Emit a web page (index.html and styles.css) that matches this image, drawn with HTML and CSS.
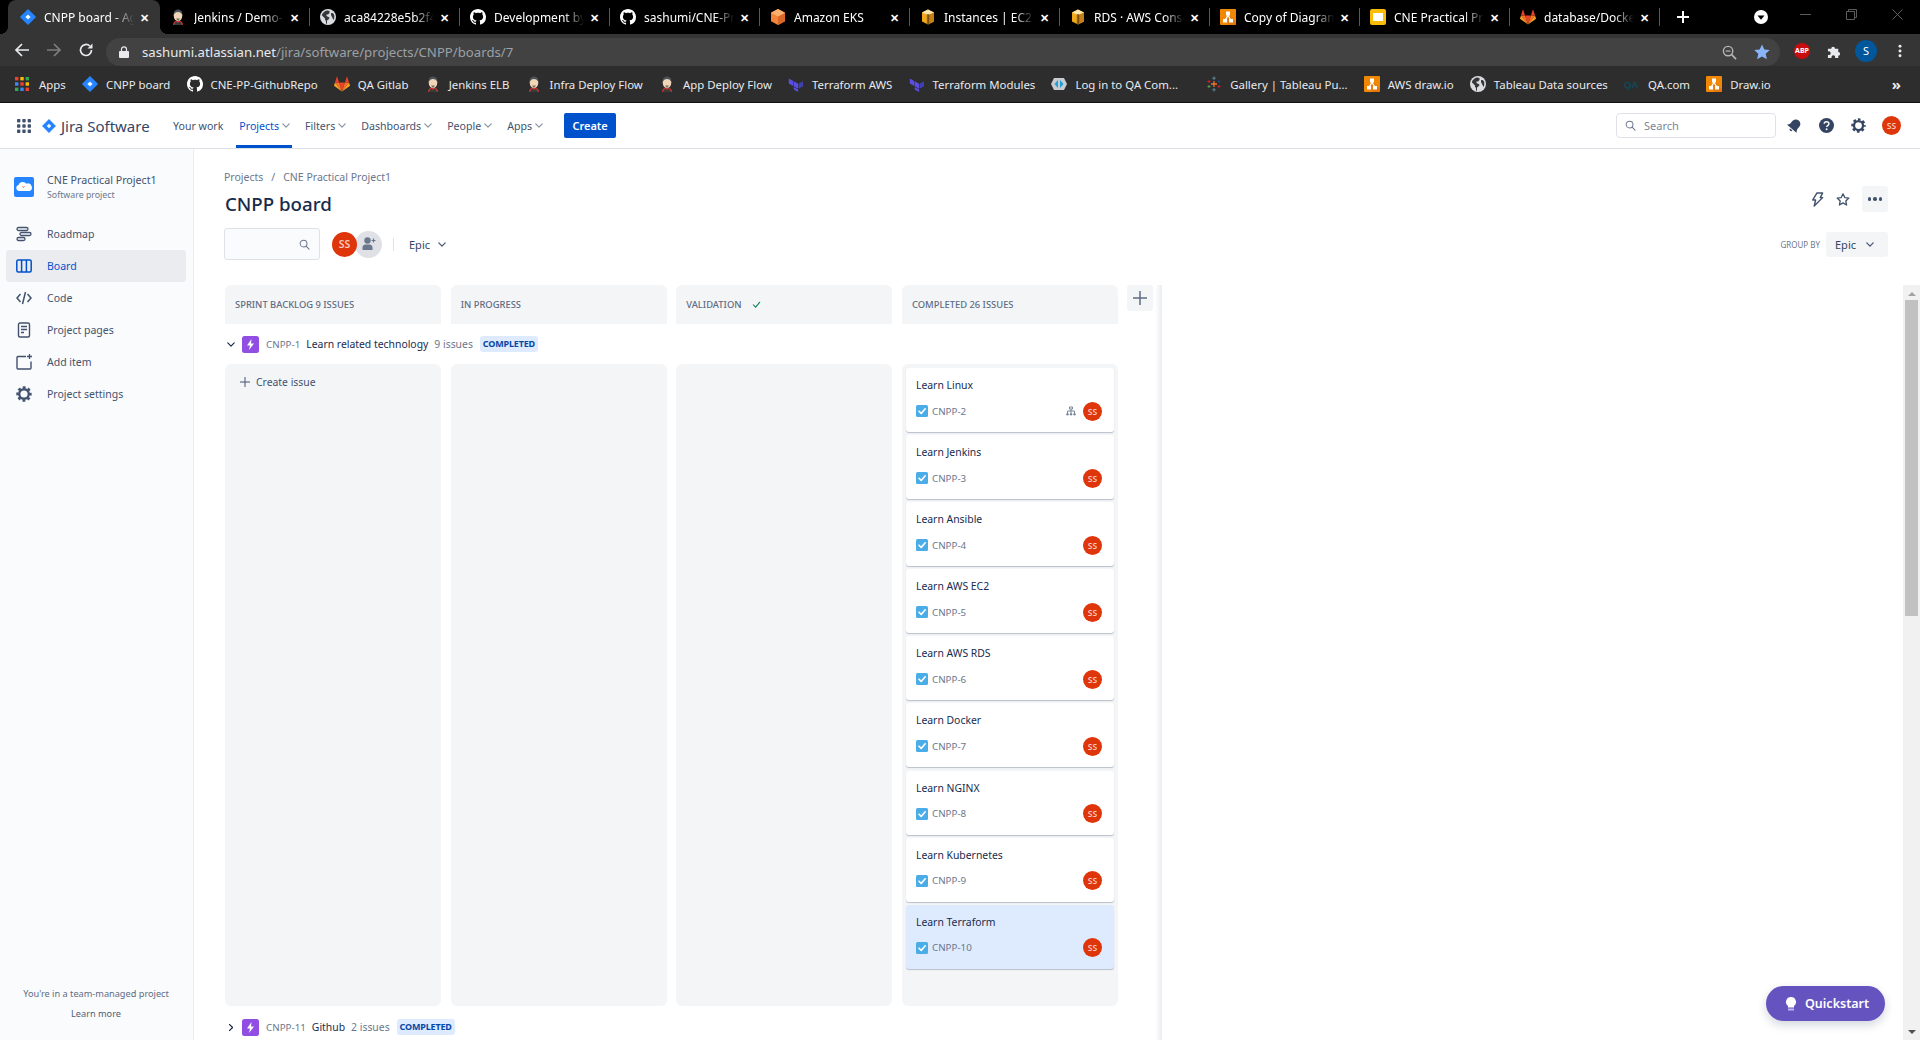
FILE: index.html
```html
<!DOCTYPE html>
<html lang="en">
<head>
<meta charset="utf-8">
<title>CNPP board</title>
<link rel="stylesheet" href="styles.css">
</head>
<body>
<svg class="defs" width="0" height="0" aria-hidden="true">
  <symbol id="i-jira" viewBox="0 0 16 16"><path fill="#2684ff" d="M8 0l7.6 7.6a.6.6 0 0 1 0 .8L8 16 .4 8.4a.6.6 0 0 1 0-.8z"/><path fill="#fff" d="M8 5.4L10.6 8 8 10.6 5.4 8z" opacity=".95"/></symbol>
  <symbol id="i-jenkins" viewBox="0 0 16 16"><path fill="#d33833" d="M3 16c0-3 2-4.500 5-4.500s5 1.500 5 4.500z"/><path fill="#3a3a3a" d="M4 16c.5-2 1.500-3 2.500-3.500L8 14l1.500-1.500c1 .5 2 1.500 2.500 3.500z"/><ellipse cx="8" cy="6.500" rx="4.300" ry="5.500" fill="#f0d6b7"/><path fill="#49525c" d="M3.700 6C3.500 2 6 .5 8 .5s4.500 1.500 4.300 5.500c-1-2-2-3-4.300-3S4.700 4 3.700 6z"/><path fill="#7a6a5c" d="M6 9.500h4L8 12z"/></symbol>
  <symbol id="i-globe" viewBox="0 0 16 16"><circle cx="8" cy="8" r="8" fill="#dadce0"/><path fill="#35363a" d="M7 1.500C4.500 2 2.500 3.800 1.800 6.200L5 9.500v1c0 .6.400 1 1 1v2.800c-.2.300.3.600 1 .7V11.500L9 10l.5-1.500L6.500 7V5.500H8L9.500 4V2A6 6 0 0 0 7 1.500zM11 4.500V6l1 2 1.500 3c1-1.200 1-4 .5-5.500C13.500 4.500 12 3.500 11 4.500z"/></symbol>
  <symbol id="i-github" viewBox="0 0 16 16"><path fill="#fff" d="M8 0C3.580 0 0 3.580 0 8c0 3.540 2.290 6.530 5.470 7.590.4.070.55-.17.55-.38 0-.19-.01-.82-.01-1.490-2.010.37-2.530-.49-2.690-.94-.09-.23-.48-.94-.82-1.130-.28-.15-.68-.52-.01-.53.63-.01 1.080.58 1.230.82.72 1.210 1.870.87 2.330.66.07-.52.28-.87.51-1.070-1.780-.2-3.640-.89-3.640-3.950 0-.87.31-1.590.82-2.150-.08-.2-.36-1.020.08-2.120 0 0 .67-.21 2.200.82.64-.18 1.320-.27 2-.27.68 0 1.360.09 2 .27 1.530-1.040 2.200-.82 2.200-.82.44 1.100.16 1.920.08 2.120.51.56.82 1.270.82 2.150 0 3.070-1.870 3.750-3.650 3.950.29.25.54.73.54 1.480 0 1.070-.01 1.930-.01 2.200 0 .21.15.46.55.38A8.013 8.013 0 0 0 16 8c0-4.420-3.580-8-8-8z"/></symbol>
  <symbol id="i-eks" viewBox="0 0 16 16"><path fill="#f58536" d="M8 0l7 3.800v8.400L8 16l-7-3.800V3.800z"/><path fill="#d9672a" d="M8 7.500V16l7-3.800V3.800z"/><path fill="#fbb06f" d="M8 0l7 3.800L8 7.500 1 3.800z"/></symbol>
  <symbol id="i-box" viewBox="0 0 16 16"><path fill="#f2a81d" d="M2 3.500L8 .5l6 3v9l-6 3-6-3z"/><path fill="#c67f12" d="M8 5.500v10l6-3v-9z"/><path fill="#fde6a8" d="M2 3.500L8 .5l6 3-6 2.500z"/><path fill="#3a2a10" d="M6.800 5h2.400v10.500H6.800z" opacity=".55"/></symbol>
  <symbol id="i-drawio" viewBox="0 0 16 16"><rect width="16" height="16" rx="1" fill="#f08705"/><path fill="#df6c0c" d="M8 5l8 8v3H8z" opacity=".6"/><path fill="#fff" d="M6 2.500h4v4H8.700l2.300 3.500H13v3.500H9V10h.5L8 7.500 6.500 10H7v3.500H3V10h2l2.300-3.500H6z"/></symbol>
  <symbol id="i-slides" viewBox="0 0 16 16"><rect width="16" height="16" rx="2" fill="#fbbc04"/><rect x="3" y="4" width="10" height="8" fill="#fff"/></symbol>
  <symbol id="i-gitlab" viewBox="0 0 16 16"><path fill="#e24329" d="M8 15.500L10.900 6.500H5.100z"/><path fill="#fc6d26" d="M8 15.500L5.100 6.500H1z"/><path fill="#fca326" d="M1 6.500L.1 9.200c-.1.300 0 .500.200.700L8 15.500z"/><path fill="#e24329" d="M1 6.500h4.100L3.300 1c-.1-.3-.5-.3-.6 0z"/><path fill="#fc6d26" d="M8 15.500l2.900-9H15z"/><path fill="#fca326" d="M15 6.500l.9 2.700c.1.300 0 .500-.2.700L8 15.500z"/><path fill="#e24329" d="M15 6.500h-4.100L12.700 1c.1-.3.5-.3.6 0z"/></symbol>
  <symbol id="i-terraform" viewBox="0 0 16 16"><path fill="#5c4ee5" d="M5.700 5.300l4.400 2.500v5L5.700 10.300z"/><path fill="#4040b2" d="M10.600 7.800v5l4.400-2.500v-5z"/><path fill="#5c4ee5" d="M.8 2.500v5l4.400 2.500V5zM5.700 10.900l4.400 2.500v-.1V16l-4.400-2.500z"/></symbol>
  <symbol id="i-qacom" viewBox="0 0 16 16"><path fill="#c8ccd0" d="M3 2h10l3 6-3 6H3L0 8z"/><path fill="#1aa0d8" d="M7 4L3.500 8 7 12zM9 4l3.500 4L9 12z"/></symbol>
  <symbol id="i-tableau" viewBox="0 0 16 16"><path stroke="#e8762c" stroke-width="1.300" d="M8 5v6M5 8h6"/><path stroke="#5b879b" stroke-width="1" d="M8 .5v3.500M6.300 2.200h3.400M8 12v3.500M6.300 13.800h3.400"/><path stroke="#c72035" stroke-width="1" d="M3 4v3M1.500 5.500h3M13 9v3M11.500 10.500h3"/><path stroke="#1f457e" stroke-width="1" d="M13 4v3M11.500 5.500h3"/><path stroke="#59a14f" stroke-width="1" d="M3 9v3M1.500 10.500h3"/></symbol>
  <symbol id="i-qa" viewBox="0 0 18 12"><text x="0" y="10" font-family="Liberation Sans, sans-serif" font-size="11" font-weight="700" fill="#0d4a5c">QA</text></symbol>
  <symbol id="i-apps" viewBox="0 0 14 14"><rect width="3.400" height="3.400" fill="#ea4335"/><rect x="5.300" width="3.400" height="3.400" fill="#fbbc04"/><rect x="10.600" width="3.400" height="3.400" fill="#34a853"/><rect y="5.300" width="3.400" height="3.400" fill="#4285f4"/><rect x="5.300" y="5.300" width="3.400" height="3.400" fill="#ea4335"/><rect x="10.600" y="5.300" width="3.400" height="3.400" fill="#fbbc04"/><rect y="10.600" width="3.400" height="3.400" fill="#34a853"/><rect x="5.300" y="10.600" width="3.400" height="3.400" fill="#4285f4"/><rect x="10.600" y="10.600" width="3.400" height="3.400" fill="#ea4335"/></symbol>
  <symbol id="i-chev" viewBox="0 0 10 6"><path d="M1 1l4 4 4-4" fill="none" stroke="currentColor" stroke-width="1.500" stroke-linecap="round" stroke-linejoin="round"/></symbol>
  <symbol id="i-search" viewBox="0 0 12 12"><circle cx="5" cy="5" r="3.700" fill="none" stroke="currentColor" stroke-width="1.100"/><path d="M8 8l3 3" stroke="currentColor" stroke-width="1.200" stroke-linecap="round"/></symbol>
  <symbol id="i-epic" viewBox="0 0 17 17"><rect width="17" height="17" rx="2.500" fill="#904ee2"/><path fill="#fff" d="M9.500 3L5 9.500h3L7 14l5-6.500H9z"/></symbol>
  <symbol id="i-check" viewBox="0 0 12 12"><rect width="12" height="12" rx="1.500" fill="#4bade8"/><path d="M3 6.200l2.200 2.200L9.200 3.800" fill="none" stroke="#fff" stroke-width="1.600" stroke-linecap="round" stroke-linejoin="round"/></symbol>
  <symbol id="i-sub" viewBox="0 0 10 10"><path fill="none" stroke="#7a869a" stroke-width="1" d="M3.500 1h3v2h-3zM5 3v2M1.500 7V5h7v2"/><circle cx="1.500" cy="8.300" r="1.200" fill="#7a869a"/><circle cx="5" cy="8.300" r="1.200" fill="#7a869a"/><circle cx="8.500" cy="8.300" r="1.200" fill="#7a869a"/><path d="M5 5v2" stroke="#7a869a"/></symbol>
  <symbol id="i-gear" viewBox="0 0 16 16"><circle cx="8" cy="8" r="4.800" fill="none" stroke="currentColor" stroke-width="2.400"/><circle cx="8" cy="8" r="6.600" fill="none" stroke="currentColor" stroke-width="2.200" stroke-dasharray="2.900 2.280" stroke-dashoffset="1.450"/></symbol>
</svg>

<header class="chrome">
  <div class="tabstrip">
    <div class="tab active"><svg class="fav"><use href="#i-jira"/></svg><span class="tab-title">CNPP board - Agile board</span><span class="tab-x">✕</span></div>
    <div class="tab"><svg class="fav"><use href="#i-jenkins"/></svg><span class="tab-title">Jenkins / Demo-App</span><span class="tab-x">✕</span></div>
    <div class="tab"><svg class="fav"><use href="#i-globe"/></svg><span class="tab-title">aca84228e5b2f4b1a9</span><span class="tab-x">✕</span></div>
    <div class="tab"><svg class="fav"><use href="#i-github"/></svg><span class="tab-title">Development by</span><span class="tab-x">✕</span></div>
    <div class="tab"><svg class="fav"><use href="#i-github"/></svg><span class="tab-title">sashumi/CNE-Practical</span><span class="tab-x">✕</span></div>
    <div class="tab"><svg class="fav"><use href="#i-eks"/></svg><span class="tab-title">Amazon EKS</span><span class="tab-x">✕</span></div>
    <div class="tab"><svg class="fav"><use href="#i-box"/></svg><span class="tab-title">Instances | EC2 Manage</span><span class="tab-x">✕</span></div>
    <div class="tab"><svg class="fav"><use href="#i-box"/></svg><span class="tab-title">RDS · AWS Console</span><span class="tab-x">✕</span></div>
    <div class="tab"><svg class="fav"><use href="#i-drawio"/></svg><span class="tab-title">Copy of Diagram</span><span class="tab-x">✕</span></div>
    <div class="tab"><svg class="fav"><use href="#i-slides"/></svg><span class="tab-title">CNE Practical Project</span><span class="tab-x">✕</span></div>
    <div class="tab"><svg class="fav"><use href="#i-gitlab"/></svg><span class="tab-title">database/Dockerfile</span><span class="tab-x">✕</span></div>
    <svg class="newtab" viewBox="0 0 12 12"><path d="M6 0v12M0 6h12" stroke="#fff" stroke-width="2"/></svg>
    <svg class="tabsearch" viewBox="0 0 14 14"><circle cx="7" cy="7" r="7" fill="#fff"/><path d="M3.500 5.500h7L7 9.800z" fill="#000"/></svg>
    <div class="winctl">
      <svg viewBox="0 0 11 11"><path d="M0 5.500h11" stroke="#5c5c5c"/></svg>
      <svg viewBox="0 0 11 11"><path d="M2.500 2.500V.5h8v8h-2M.5 2.500h8v8h-8z" fill="none" stroke="#5c5c5c"/></svg>
      <svg viewBox="0 0 11 11"><path d="M.5.500l10 10M10.500.5l-10 10" stroke="#5c5c5c"/></svg>
    </div>
  </div>

  <div class="toolbar">
    <svg class="tool" viewBox="0 0 16 16"><path d="M15 8H2M8 2L2 8l6 6" fill="none" stroke="#e8eaed" stroke-width="1.700"/></svg>
    <svg class="tool" viewBox="0 0 16 16"><path d="M1 8h13M8 2l6 6-6 6" fill="none" stroke="#7d7e80" stroke-width="1.700"/></svg>
    <svg class="tool" viewBox="0 0 16 16"><path d="M13.500 8A5.500 5.500 0 1 1 11.800 4" fill="none" stroke="#e8eaed" stroke-width="1.700"/><path d="M14.500 1.500v5h-5z" fill="#e8eaed"/></svg>
    <div class="omnibox">
      <svg class="lock" viewBox="0 0 10 12"><path d="M2.500 5V3.300a2.500 2.500 0 0 1 5 0V5" fill="none" stroke="#e8eaed" stroke-width="1.200"/><rect y="5" width="10" height="7" rx="1" fill="#e8eaed"/></svg>
      <span class="url"><span class="url-host">sashumi.atlassian.net</span>/jira/software/projects/CNPP/boards/7</span>
      <svg class="omni-ico" viewBox="0 0 16 16"><circle cx="6.500" cy="6.500" r="5" fill="none" stroke="#b4b6b9" stroke-width="1.500"/><path d="M10 10l5 5" stroke="#b4b6b9" stroke-width="1.700"/><path d="M4 6.500h5" stroke="#b4b6b9" stroke-width="1.300"/></svg>
      <svg class="omni-ico star" viewBox="0 0 16 16"><path fill="#8ab4f8" d="M8 .5l2.300 5 5.500.6-4.100 3.700 1.200 5.400L8 12.400l-4.900 2.800 1.200-5.400L.2 6.100l5.500-.6z"/></svg>
    </div>
    <div class="ext-group">
      <span class="abp">ABP</span>
      <svg class="puzzle" viewBox="0 0 16 16"><path fill="#e8eaed" d="M1 5h3.500a2 2 0 1 1 4 0H12v3.500a2 2 0 1 1 0 4V15H8.500a2 2 0 1 0-3.500 0H1v-3.500a2 2 0 1 0 0-3.500z"/></svg>
      <span class="profile">S</span>
      <svg class="kebab" viewBox="0 0 4 16"><circle cx="2" cy="2.500" r="1.700" fill="#e8eaed"/><circle cx="2" cy="8" r="1.700" fill="#e8eaed"/><circle cx="2" cy="13.500" r="1.700" fill="#e8eaed"/></svg>
    </div>
  </div>

  <nav class="bookmarks">
    <a class="bm"><svg class="fav apps"><use href="#i-apps"/></svg>Apps</a>
    <a class="bm"><svg class="fav"><use href="#i-jira"/></svg>CNPP board</a>
    <a class="bm"><svg class="fav"><use href="#i-github"/></svg>CNE-PP-GithubRepo</a>
    <a class="bm"><svg class="fav"><use href="#i-gitlab"/></svg>QA Gitlab</a>
    <a class="bm"><svg class="fav"><use href="#i-jenkins"/></svg>Jenkins ELB</a>
    <a class="bm"><svg class="fav"><use href="#i-jenkins"/></svg>Infra Deploy Flow</a>
    <a class="bm"><svg class="fav"><use href="#i-jenkins"/></svg>App Deploy Flow</a>
    <a class="bm"><svg class="fav"><use href="#i-terraform"/></svg>Terraform AWS</a>
    <a class="bm"><svg class="fav"><use href="#i-terraform"/></svg>Terraform Modules</a>
    <a class="bm bm-long"><svg class="fav"><use href="#i-qacom"/></svg>Log in to QA Com...</a>
    <a class="bm"><svg class="fav"><use href="#i-tableau"/></svg>Gallery | Tableau Pu...</a>
    <a class="bm"><svg class="fav"><use href="#i-drawio"/></svg>AWS draw.io</a>
    <a class="bm"><svg class="fav"><use href="#i-globe"/></svg>Tableau Data sources</a>
    <a class="bm"><svg class="fav"><use href="#i-qa"/></svg>QA.com</a>
    <a class="bm"><svg class="fav"><use href="#i-drawio"/></svg>Draw.io</a>
    <span class="bm-more">»</span>
  </nav>
</header>

<nav class="topnav">
  <svg class="appgrid" viewBox="0 0 14 14"><g fill="#42526e"><rect width="3.400" height="3.400" rx=".8"/><rect x="5.300" width="3.400" height="3.400" rx=".8"/><rect x="10.600" width="3.400" height="3.400" rx=".8"/><rect y="5.300" width="3.400" height="3.400" rx=".8"/><rect x="5.300" y="5.300" width="3.400" height="3.400" rx=".8"/><rect x="10.600" y="5.300" width="3.400" height="3.400" rx=".8"/><rect y="10.600" width="3.400" height="3.400" rx=".8"/><rect x="5.300" y="10.600" width="3.400" height="3.400" rx=".8"/><rect x="10.600" y="10.600" width="3.400" height="3.400" rx=".8"/></g></svg>
  <svg class="jira-mark"><use href="#i-jira"/></svg>
  <span class="jira-word">Jira Software</span>
  <a class="nav-item first">Your work</a>
  <a class="nav-item current">Projects<svg class="chev"><use href="#i-chev"/></svg></a>
  <a class="nav-item">Filters<svg class="chev"><use href="#i-chev"/></svg></a>
  <a class="nav-item">Dashboards<svg class="chev"><use href="#i-chev"/></svg></a>
  <a class="nav-item">People<svg class="chev"><use href="#i-chev"/></svg></a>
  <a class="nav-item">Apps<svg class="chev"><use href="#i-chev"/></svg></a>
  <button class="create">Create</button>
  <div class="nav-right">
    <div class="nav-search"><svg class="search-ico"><use href="#i-search"/></svg>Search</div>
    <svg class="nav-ico bell" viewBox="0 0 16 16"><path fill="#344563" transform="rotate(40 8 8)" d="M8 1a4.800 4.800 0 0 0-4.800 4.800v3.700L1.500 12.500h13l-1.700-3V5.800A4.800 4.800 0 0 0 8 1zM6.300 13.500a1.700 1.700 0 0 0 3.400 0z"/></svg>
    <svg class="nav-ico" viewBox="0 0 16 16"><circle cx="8" cy="8" r="8" fill="#344563"/><path d="M5.500 6.200C5.600 4.700 6.700 4 8 4c1.500 0 2.600.9 2.600 2.200 0 1.900-2.400 1.900-2.400 3.500" fill="none" stroke="#fff" stroke-width="1.500"/><circle cx="8.100" cy="12" r="1" fill="#fff"/></svg>
    <svg class="nav-ico gear"><use href="#i-gear"/></svg>
    <span class="avatar nav-avatar">SS</span>
  </div>
</nav>

<div class="app">
  <aside class="sidebar">
    <div class="project">
      <svg class="project-ico" viewBox="0 0 20 20"><rect width="20" height="20" rx="2" fill="#2684ff"/><path fill="#fff" d="M5 14a3 3 0 0 1-.5-5.900A4 4 0 0 1 8 5a4.500 4.500 0 0 1 4.500 1.800A3.600 3.600 0 0 1 15.500 14z"/><path d="M8.500 9.500c.5 1 1.500 1 2 0" fill="none" stroke="#de350b" stroke-width=".8"/></svg>
      <div>
        <div class="project-name">CNE Practical Project1</div>
        <div class="project-type">Software project</div>
      </div>
    </div>
    <ul class="side-list">
      <li class="side-item"><svg class="side-ico" viewBox="0 0 16 16"><g fill="none" stroke="#42526e" stroke-width="1.300"><rect x="1" y="1.500" width="11" height="3" rx="1.500"/><rect x="4" y="6.500" width="11" height="3" rx="1.500"/><rect x="1" y="11.500" width="8" height="3" rx="1.500"/></g></svg>Roadmap</li>
      <li class="side-item selected"><svg class="side-ico" viewBox="0 0 16 16"><g fill="none" stroke="#0052cc" stroke-width="1.500"><rect x=".8" y="2" width="14.400" height="12" rx="1.500"/><path d="M5.600 2v12M10.400 2v12"/></g></svg>Board</li>
      <li class="side-item"><svg class="side-ico" viewBox="0 0 16 16"><path d="M4.500 4L1 8l3.500 4M11.500 4L15 8l-3.500 4M9.500 2l-3 12" fill="none" stroke="#42526e" stroke-width="1.500"/></svg>Code</li>
      <li class="side-item"><svg class="side-ico" viewBox="0 0 16 16"><rect x="2.500" y="1" width="11" height="14" rx="1.500" fill="none" stroke="#42526e" stroke-width="1.400"/><path d="M5 4.500h6M5 7.500h6M5 10.500h3" stroke="#42526e" stroke-width="1.400"/></svg>Project pages</li>
      <li class="side-item"><svg class="side-ico" viewBox="0 0 16 16"><path d="M10 2.500H2a1 1 0 0 0-1 1V14a1 1 0 0 0 1 1h12a1 1 0 0 0 1-1V7.500" fill="none" stroke="#42526e" stroke-width="1.400"/><path d="M13.500 0v5M11 2.500h5" stroke="#42526e" stroke-width="1.300"/></svg>Add item</li>
      <li class="side-item"><svg class="side-ico side-gear"><use href="#i-gear"/></svg>Project settings</li>
    </ul>
    <div class="side-foot">
      <p class="foot-line">You're in a team-managed project</p>
      <p class="foot-link">Learn more</p>
    </div>
  </aside>

  <main class="main">
    <div class="page-head">
      <div class="crumbs"><span>Projects</span><span class="crumb-sep">/</span><span>CNE Practical Project1</span></div>
      <div class="title-row">
        <h1 class="title">CNPP board</h1>
        <div class="title-actions">
          <svg class="act-ico" viewBox="0 0 14 16"><path d="M7 1h6L10.500 6H13L4 15l1.500-6.500H2.500z" fill="none" stroke="#42526e" stroke-width="1.500" stroke-linejoin="round"/></svg>
          <svg class="act-ico" viewBox="0 0 16 16"><path d="M8 1.500l2 4.300 4.700.6-3.500 3.200.9 4.700L8 11.900l-4.100 2.400.9-4.700L1.300 6.400 6 5.800z" fill="none" stroke="#42526e" stroke-width="1.500" stroke-linejoin="round"/></svg>
          <button class="more-btn"><i></i><i></i><i></i></button>
        </div>
      </div>
      <div class="filters">
        <div class="filter-search"><svg class="search-ico"><use href="#i-search"/></svg></div>
        <div class="avatars">
          <span class="avatar big">SS</span>
          <span class="add-person"><svg viewBox="0 0 16 16"><circle cx="6.500" cy="4.500" r="3.200" fill="#6b778c"/><path fill="#6b778c" d="M1.500 14v-2.500c0-1.800 1.500-3 3-3h4c1.500 0 3 1.200 3 3V14z"/><path d="M12.500 2.500v4M10.500 4.500h4" stroke="#6b778c" stroke-width="1.200"/></svg></span>
        </div>
        <span class="filter-sep"></span>
        <span class="filter-epic">Epic<svg class="chev dark"><use href="#i-chev"/></svg></span>
        <div class="group-by">
          <span class="group-label">GROUP BY</span>
          <button class="group-btn">Epic<svg class="chev dark"><use href="#i-chev"/></svg></button>
        </div>
      </div>
    </div>

    <div class="board-row">
      <div class="board">
        <div class="col-heads">
          <div class="col-head">SPRINT BACKLOG 9 ISSUES</div>
          <div class="col-head">IN PROGRESS</div>
          <div class="col-head">VALIDATION<svg class="done-check" viewBox="0 0 10 8"><path d="M1 4l3 3 5-6" fill="none" stroke="#00875a" stroke-width="1.200"/></svg></div>
          <div class="col-head">COMPLETED 26 ISSUES</div>
        </div>

        <div class="epic-row">
          <svg class="chev epic-chev"><use href="#i-chev"/></svg>
          <svg class="epic-ico"><use href="#i-epic"/></svg>
          <span class="epic-key">CNPP-1</span>
          <span class="epic-name">Learn related technology</span>
          <span class="epic-count">9 issues</span>
          <span class="lozenge">COMPLETED</span>
        </div>

        <div class="lanes">
          <div class="lane"><div class="create-issue"><svg viewBox="0 0 10 10"><path d="M5 0v10M0 5h10" stroke="#42526e" stroke-width="1"/></svg>Create issue</div></div>
          <div class="lane"></div>
          <div class="lane"></div>
          <div class="lane cards">
            <article class="card"><div class="card-title">Learn Linux</div><div class="card-meta"><svg class="check"><use href="#i-check"/></svg><span class="card-key">CNPP-2</span><svg class="sub-ico"><use href="#i-sub"/></svg><span class="avatar small">SS</span></div></article>
            <article class="card"><div class="card-title">Learn Jenkins</div><div class="card-meta"><svg class="check"><use href="#i-check"/></svg><span class="card-key">CNPP-3</span><span class="avatar small">SS</span></div></article>
            <article class="card"><div class="card-title">Learn Ansible</div><div class="card-meta"><svg class="check"><use href="#i-check"/></svg><span class="card-key">CNPP-4</span><span class="avatar small">SS</span></div></article>
            <article class="card"><div class="card-title">Learn AWS EC2</div><div class="card-meta"><svg class="check"><use href="#i-check"/></svg><span class="card-key">CNPP-5</span><span class="avatar small">SS</span></div></article>
            <article class="card"><div class="card-title">Learn AWS RDS</div><div class="card-meta"><svg class="check"><use href="#i-check"/></svg><span class="card-key">CNPP-6</span><span class="avatar small">SS</span></div></article>
            <article class="card"><div class="card-title">Learn Docker</div><div class="card-meta"><svg class="check"><use href="#i-check"/></svg><span class="card-key">CNPP-7</span><span class="avatar small">SS</span></div></article>
            <article class="card"><div class="card-title">Learn NGINX</div><div class="card-meta"><svg class="check"><use href="#i-check"/></svg><span class="card-key">CNPP-8</span><span class="avatar small">SS</span></div></article>
            <article class="card"><div class="card-title">Learn Kubernetes</div><div class="card-meta"><svg class="check"><use href="#i-check"/></svg><span class="card-key">CNPP-9</span><span class="avatar small">SS</span></div></article>
            <article class="card highlight"><div class="card-title">Learn Terraform</div><div class="card-meta"><svg class="check"><use href="#i-check"/></svg><span class="card-key">CNPP-10</span><span class="avatar small">SS</span></div></article>
          </div>
        </div>

        <div class="epic-row second">
          <svg class="chev epic-chev closed"><use href="#i-chev"/></svg>
          <svg class="epic-ico"><use href="#i-epic"/></svg>
          <span class="epic-key">CNPP-11</span>
          <span class="epic-name">Github</span>
          <span class="epic-count">2 issues</span>
          <span class="lozenge">COMPLETED</span>
        </div>
      </div>

      <button class="add-col"><svg viewBox="0 0 14 14"><path d="M7 0v14M0 7h14" stroke="#5e6c84" stroke-width="1.500"/></svg></button>
      <div class="panel-edge"></div>
      <div class="blank"></div>
      <div class="scrollbar">
        <span class="arrow up"></span>
        <span class="thumb"></span>
        <span class="arrow down"></span>
      </div>
    </div>
  </main>
</div>

<button class="quickstart"><svg viewBox="0 0 10 14"><path fill="#fff" d="M5 0a5 5 0 0 1 3 9v1.500H2V9a5 5 0 0 1 3-9z"/><rect x="2" y="11.500" width="6" height="2" fill="#c0b6f2"/></svg>Quickstart</button>
</body>
</html>
```

FILE: styles.css
```css
* { box-sizing: border-box; }
html, body { margin: 0; height: 1040px; overflow: hidden; background: #fff; }
body { font-family: "Noto Sans", "Open Sans", sans-serif; color: #172b4d; position: relative; }
.defs { position: absolute; }
p, ul, h1 { margin: 0; padding: 0; }
ul { list-style: none; }
button { font-family: inherit; border: 0; padding: 0; }

/* browser chrome */
.chrome { background: #2d2d2d; height: 103px; border-bottom: 1px solid #111; }
.fav { width: 16px; height: 16px; flex: none; }
.tabstrip { height: 34px; background: #000; display: flex; align-items: stretch; padding-left: 10px; position: relative; }
.tab { width: 150px; flex: none; display: flex; align-items: center; padding-left: 10px; position: relative; color: #fff; font-size: 12px; }
.tab::after { content: ""; position: absolute; right: 0; top: 8px; bottom: 8px; width: 1px; background: #55585c; }
.tab.active { background: #353535; border-radius: 8px 8px 0 0; box-shadow: -2px 0 0 #353535; z-index: 1; }
.tab.active::before { content: ""; position: absolute; left: -10px; bottom: 0; width: 8px; height: 8px; background: radial-gradient(circle at 0 0, transparent 8px, #353535 8px); }
.tab.active::after { right: -8px; top: auto; bottom: 0; width: 8px; height: 8px; background: radial-gradient(circle at 100% 0, transparent 8px, #353535 8px); }
.tab-title { margin-left: 8px; width: 90px; white-space: nowrap; overflow: hidden; -webkit-mask-image: linear-gradient(90deg, #000 78%, transparent); mask-image: linear-gradient(90deg, #000 78%, transparent); }
.tab-x { width: 20px; text-align: center; font-size: 11px; font-weight: 700; }
.newtab { width: 12px; height: 12px; margin: auto 0 auto 17px; }
.tabsearch { width: 14px; height: 14px; margin: auto 0 auto 65px; }
.winctl { margin-left: auto; display: flex; gap: 35px; padding: 9px 17px 0 0; }
.winctl svg { width: 11px; height: 11px; }

.toolbar { height: 32px; background: #353535; display: flex; align-items: center; padding-left: 14px; }
.tool { width: 16px; height: 16px; margin-right: 16px; flex: none; }
.omnibox { margin-left: -4px; width: 1674px; height: 28px; margin-top: 4px; background: #424242; border-radius: 14px; display: flex; align-items: center; padding: 0 10px 0 13px; }
.lock { width: 10px; height: 12px; }
.url { margin-left: 13px; color: #9aa0a6; font-size: 13.200px; white-space: nowrap; }
.url-host { color: #e8eaed; }
.omni-ico { width: 15px; height: 15px; margin-left: auto; }
.omni-ico.star { margin-left: 17px; width: 16px; height: 16px; }
.ext-group { display: flex; align-items: center; margin-top: 2px; }
.abp { width: 16px; height: 16px; margin-left: 14px; border-radius: 50%; background: #c70d0d; color: #fff; font-size: 7px; line-height: 16px; font-weight: 700; text-align: center; }
.puzzle { width: 15px; height: 15px; margin-left: 17px; }
.profile { width: 22px; height: 22px; margin-left: 13px; border-radius: 50%; background: #01579b; color: #fff; font-size: 11px; line-height: 22px; text-align: center; }
.kebab { width: 4px; height: 14px; margin-left: 21px; }

.bookmarks { height: 36px; background: #2d2d2d; display: flex; align-items: center; padding-left: 15px; gap: 16.200px; color: #e8eaed; font-size: 11.400px; white-space: nowrap; position: relative; }
.bm { display: flex; align-items: center; gap: 8px; }
.bm-long { margin-right: 12px; }
.fav.apps { width: 14px; height: 14px; margin-right: 2px; }
.bm-more { margin-left: auto; padding-right: 19px; font-size: 15px; font-weight: 700; }

/* jira top navigation */
.topnav { height: 46px; display: flex; align-items: center; border-bottom: 1px solid #dfe1e6; padding-left: 17px; color: #42526e; font-size: 10.600px; }
.appgrid { width: 14px; height: 14px; flex: none; }
.jira-mark { width: 14px; height: 14px; margin-left: 11px; }
.jira-word { margin-left: 5px; font-size: 15px; color: #344563; width: 112px; white-space: nowrap; }
.nav-item { height: 45px; display: flex; align-items: center; margin-right: 15px; position: relative; }
.nav-item.first { margin-right: 16px; }
.nav-item.current { color: #0052cc; }
.nav-item.current::after { content: ""; position: absolute; left: -3px; right: -2px; bottom: 0; height: 3px; background: #0052cc; }
.chev { width: 8px; height: 5px; color: #8993a4; margin-left: 3px; flex: none; }
.chev.dark { color: #42526e; }
.create { margin-left: 6px; width: 52px; height: 25px; background: #0052cc; color: #fff; font-size: 11px; font-weight: 600; border-radius: 2px; }
.nav-right { margin-left: auto; display: flex; align-items: center; padding-right: 19px; }
.nav-search { width: 160px; height: 25px; border: 1px solid #dfe1e6; border-radius: 4px; display: flex; align-items: center; padding-left: 8px; gap: 8px; color: #7a869a; font-size: 11px; background: #fff; }
.search-ico { width: 11px; height: 11px; color: #6b778c; }
.nav-ico { width: 15px; height: 15px; margin-left: 17px; flex: none; }
.nav-ico.bell { margin-left: 11px; }
.nav-ico.gear { color: #344563; }
.avatar { display: inline-block; border-radius: 50%; background: #de350b; color: #f6c9bb; font-weight: 600; text-align: center; flex: none; }
.nav-avatar { width: 19px; height: 19px; margin-left: 16px; font-size: 8.500px; line-height: 19px; }

/* app body */
.app { height: 891px; display: flex; }
.sidebar { width: 194px; flex: none; background: #fafbfc; border-right: 1px solid #ebecf0; display: flex; flex-direction: column; padding: 23px 7px 19px 6px; }
.project { display: flex; align-items: center; padding-left: 8px; gap: 13px; height: 30px; }
.project-ico { width: 20px; height: 20px; flex: none; }
.project-name { font-size: 10.700px; line-height: 15px; color: #42526e; }
.project-type { font-size: 8.800px; line-height: 14px; color: #6b778c; }
.side-list { margin-top: 16px; }
.side-item { height: 32px; display: flex; align-items: center; padding-left: 10px; gap: 15px; font-size: 10.500px; color: #42526e; border-radius: 3px; }
.side-item.selected { background: #ebecf0; color: #0052cc; }
.side-ico { width: 16px; height: 16px; flex: none; }
.side-gear { color: #42526e; }
.side-foot { margin-top: auto; text-align: center; color: #5e6c84; }
.foot-line { font-size: 9.200px; line-height: 14px; }
.foot-link { font-size: 9.200px; line-height: 14px; margin-top: 6px; color: #505f79; }

.main { flex: 1; min-width: 0; display: flex; flex-direction: column; }
.page-head { padding: 20px 32px 0 30px; }
.crumbs { height: 16px; line-height: 16px; font-size: 10.500px; color: #6b778c; display: flex; gap: 8px; }
.crumb-sep { color: #6b778c; }
.title-row { display: flex; justify-content: space-between; align-items: flex-start; padding-top: 1px; padding-left: 1px; }
.title { margin-top: 4px; font-size: 18.700px; line-height: 28px; font-weight: 500; color: #172b4d; }
.title-actions { display: flex; align-items: center; }
.act-ico { width: 14px; height: 15px; margin-right: 12px; }
.more-btn { width: 26px; height: 26px; background: #f4f5f7; border-radius: 3px; display: flex; align-items: center; justify-content: center; gap: 2px; }
.more-btn i { width: 3.500px; height: 3.500px; background: #42526e; border-radius: 50%; }
.filters { margin-top: 10px; height: 32px; display: flex; align-items: center; }
.filter-search { width: 96px; height: 32px; border: 1px solid #dfe1e6; border-radius: 3px; background: #fafbfc; display: flex; align-items: center; justify-content: flex-end; padding-right: 9px; }
.avatars { display: flex; margin-left: 12px; align-items: center; }
.avatar.big { width: 25px; height: 25px; font-size: 10.500px; line-height: 25px; position: relative; z-index: 1; }
.add-person { width: 27px; height: 27px; margin-left: -2px; border-radius: 50%; background: #dfe1e6; display: flex; align-items: center; justify-content: center; }
.add-person svg { width: 16px; height: 16px; }
.filter-sep { width: 1px; height: 13px; background: #dfe1e6; margin-left: 11px; }
.filter-epic { margin-left: 15px; font-size: 11px; color: #344563; display: flex; align-items: center; gap: 5px; }
.group-by { margin-left: auto; display: flex; align-items: center; gap: 6px; }
.group-label { font-size: 8px; color: #6b778c; }
.group-btn { width: 62px; height: 25px; background: #f4f5f7; border-radius: 3px; font-size: 11px; color: #344563; display: flex; align-items: center; padding-left: 9px; gap: 7px; }

.board-row { margin-top: 25px; flex: 1; min-height: 0; display: flex; align-items: flex-start; padding-left: 31px; overflow: hidden; }
.board { width: 893px; flex: none; }
.col-heads, .lanes { display: grid; grid-template-columns: repeat(4, 216px); column-gap: 9.670px; }
.col-head { height: 39px; background: #f4f5f7; border-radius: 6px 6px 0 0; display: flex; align-items: center; padding-left: 10px; font-size: 9.400px; color: #5e6c84; font-weight: 500; }
.done-check { width: 9px; height: 7px; margin-left: 10px; }
.epic-row { margin-top: 12px; height: 16px; display: flex; align-items: center; font-size: 10.400px; color: #172b4d; white-space: nowrap; }
.epic-row.second { margin-top: 13px; }
.epic-chev { width: 8px; height: 5px; margin: 0 7px 0 2px; color: #172b4d; }
.epic-chev.closed { transform: rotate(-90deg); }
.epic-ico { width: 17px; height: 17px; flex: none; }
.epic-key { margin-left: 7px; font-size: 9.800px; color: #6b778c; }
.epic-name { margin-left: 6px; }
.epic-count { margin-left: 6px; color: #6b778c; }
.lozenge { margin-left: 7px; height: 16px; line-height: 16px; width: 58px; text-align: center; background: #deebff; color: #0747a6; font-size: 9px; letter-spacing: -.15px; font-weight: 700; border-radius: 3px; }

.lanes { margin-top: 12px; height: 642px; }
.lane { background: #f4f5f7; border-radius: 6px; }
.lane.cards { padding: 4px; display: flex; flex-direction: column; gap: 3.100px; }
.create-issue { display: flex; align-items: center; gap: 6px; padding: 10px 0 0 15px; font-size: 10.400px; color: #42526e; line-height: 16px; }
.create-issue svg { width: 10px; height: 10px; }
.card { height: 64px; flex: none; background: #fff; border-radius: 3px; box-shadow: 0 1px 1px rgba(9, 30, 66, .25); padding: 9px 12px 0 10px; }
.card.highlight { background: #deebff; }
.card-title { font-size: 10.400px; line-height: 16px; color: #172b4d; }
.card-meta { margin-top: 8px; height: 20px; display: flex; align-items: center; }
.check { width: 12px; height: 12px; flex: none; }
.card-key { margin-left: 4px; font-size: 9.800px; color: #6b778c; flex: 1; }
.sub-ico { width: 10px; height: 10px; margin-right: 7px; }
.avatar.small { width: 19px; height: 19px; font-size: 8.500px; line-height: 19px; }

.add-col { width: 26px; height: 26px; margin-left: 9px; background: #f4f5f7; border-radius: 3px; display: flex; align-items: center; justify-content: center; flex: none; }
.add-col svg { width: 14px; height: 14px; }
.panel-edge { width: 7px; height: 755px; margin-left: 2px; flex: none; background: linear-gradient(90deg, #fff, #f4f5f7 55%, #ebecf0); }
.blank { flex: 1; }
.scrollbar { width: 17px; height: 755px; flex: none; background: #f1f1f1; display: flex; flex-direction: column; align-items: center; }
.thumb { width: 13px; height: 316px; margin-top: 4px; background: #c1c1c1; }
.arrow { width: 0; height: 0; border-left: 4px solid transparent; border-right: 4px solid transparent; }
.arrow.up { margin-top: 7px; border-bottom: 4px solid #a3a3a3; }
.arrow.down { margin-top: auto; margin-bottom: 6px; border-top: 4px solid #505050; }

.quickstart { position: absolute; left: 1766px; top: 986px; width: 119px; height: 35px; border-radius: 18px; background: #6554c0; color: #fff; font-size: 12.500px; font-weight: 600; display: flex; align-items: center; padding-left: 20px; gap: 9px; box-shadow: 0 4px 10px rgba(9, 30, 66, .18); }
.quickstart svg { width: 10px; height: 14px; }
```
